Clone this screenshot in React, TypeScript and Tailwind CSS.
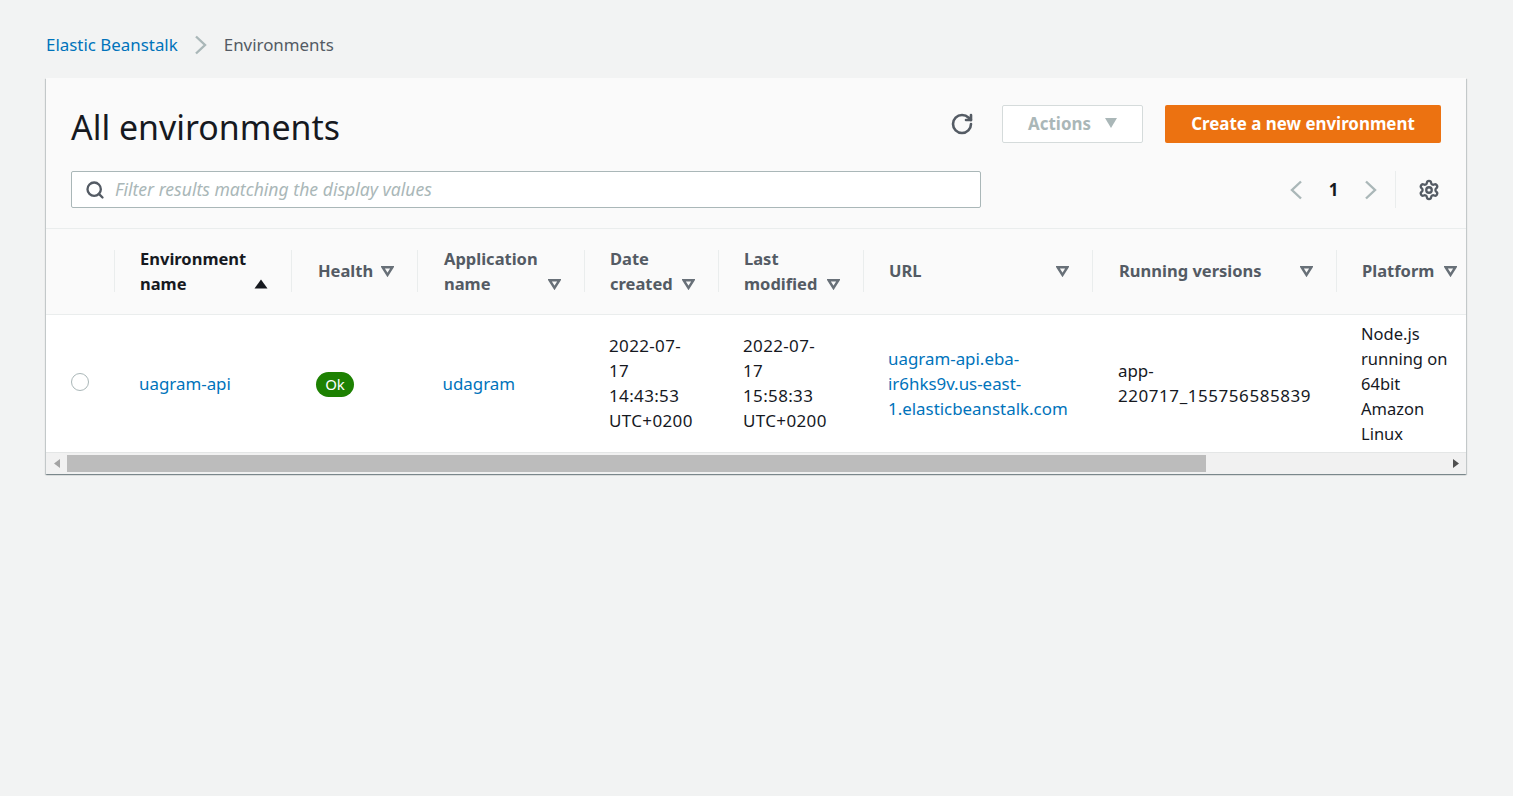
import { RotateCw, Search, Settings } from "lucide-react";

const columns = [
  { width: "w-[177px]", label: ["Environment", "name"], active: true, pad: "pl-[26px]" },
  { width: "w-[126px]", label: ["Health"], pad: "pl-[27px]" },
  { width: "w-[167px]", label: ["Application", "name"], pad: "pl-[27px]" },
  { width: "w-[134px]", label: ["Date", "created"], pad: "pl-[26px]" },
  { width: "w-[145px]", label: ["Last", "modified"], pad: "pl-[26px]" },
  { width: "w-[229px]", label: ["URL"], pad: "pl-[26px]" },
  { width: "w-[244px]", label: ["Running versions"], pad: "pl-[27px]" },
  { width: "w-[129px]", label: ["Platform"], last: true, pad: "pl-[26px]" },
];

function SortCaret({ active }: { active?: boolean }) {
  if (active) {
    return (
      <svg width="14" height="10" viewBox="0 0 14 10" className="shrink-0 mb-[7px]">
        <path d="M7 0.5 L13.5 9.5 H0.5 Z" fill="#16191f" />
      </svg>
    );
  }
  return (
    <svg width="13" height="11" viewBox="0 0 13 11" className="shrink-0 mb-[6px]">
      <path d="M1.6 1.2 H11.4 L6.5 9 Z" fill="none" stroke="#687078" strokeWidth="2.4" strokeLinejoin="miter" />
    </svg>
  );
}

function Chevron({ dir }: { dir: "left" | "right" }) {
  return (
    <svg width="14" height="20" viewBox="0 0 14 20" className="shrink-0">
      <path
        d={dir === "left" ? "M12 1.5 L3 10 L12 18.5" : "M2 1.5 L11 10 L2 18.5"}
        fill="none"
        stroke="#aab7b8"
        strokeWidth="2.4"
      />
    </svg>
  );
}

function Lines({ lines }: { lines: string[] }) {
  return (
    <>
      {lines.map((l) => (
        <div key={l}>{l}</div>
      ))}
    </>
  );
}

export default function App() {
  return (
    <div className="min-h-screen bg-[#f2f3f3] px-[46px] pt-[32px] font-['Noto_Sans',sans-serif] text-[16.9px] leading-[25px] text-[#16191f]">
      {/* Breadcrumb */}
      <div className="flex items-center h-[25px]">
        <a className="text-[#0073bb]">Elastic Beanstalk</a>
        <span className="ml-[16px] mr-[16px]">
          <Chevron dir="right" />
        </span>
        <span className="text-[#545b64]">Environments</span>
      </div>

      {/* Card */}
      <div className="mt-[21px] w-[1420px] bg-[#fafafa] shadow-[0_1px_1px_0_rgba(0,28,36,0.3),1px_1px_1px_0_rgba(0,28,36,0.15),-1px_1px_1px_0_rgba(0,28,36,0.15)]">
        <div className="px-[25px] pt-[27px] pb-[20px] border-b border-[#eaeded]">
          <div className="flex items-center h-[38px]">
            <h1 className="text-[33.9px] leading-[44px] font-normal mt-[5px]">All environments</h1>
            <RotateCw className="ml-auto mr-[28px] text-[#545b64]" size={24} strokeWidth={2.6} />
            <button className="flex items-center justify-center gap-[14px] w-[141px] h-[38px] pb-[2px] bg-white border border-[#d5dbdb] rounded-[2px] font-bold text-[#aab7b8]">
              Actions
              <svg width="12" height="10" viewBox="0 0 12 10">
                <path d="M0 0 H12 L6 10 Z" fill="#aab7b8" />
              </svg>
            </button>
            <button className="ml-[22px] w-[276px] h-[38px] pb-[2px] bg-[#ec7211] rounded-[2px] font-bold text-white">
              Create a new environment
            </button>
          </div>
          <div className="flex items-center mt-[28px] h-[37px]">
            <div className="flex items-center w-[910px] h-[37px] bg-white border border-[#aab7b8] rounded-[2px] pl-[13px]">
              <Search size={20} strokeWidth={2.8} className="text-[#545b64] shrink-0" />
              <span className="ml-[10px] italic text-[17.6px] text-[#aab7b8]">Filter results matching the display values</span>
            </div>
            <div className="ml-auto flex items-center mr-[1px]">
              <Chevron dir="left" />
              <span className="w-[61px] text-center font-bold">1</span>
              <Chevron dir="right" />
              <div className="ml-[17px] h-[37px] border-l border-[#eaeded]" />
              <Settings size={22} strokeWidth={2.5} className="ml-[22px] text-[#545b64]" />
            </div>
          </div>
        </div>

        {/* Table header */}
        <div className="flex items-center h-[86px] pb-[2px] border-b border-[#eaeded] text-[16.5px]">
          <div className="w-[68px] shrink-0" />
          {columns.map((c) => (
            <div
              key={c.label[0]}
              className={`${c.width} ${c.pad} relative shrink-0 flex items-end justify-between font-bold before:absolute before:left-0 before:top-1/2 before:-translate-y-1/2 before:h-[42px] before:border-l before:border-[#eaeded] ${
                c.last ? "pr-[8px]" : "pr-[23px]"
              } ${c.active ? "text-[#16191f]" : "text-[#545b64]"}`}
            >
              <div className="whitespace-nowrap">
                <Lines lines={c.label} />
              </div>
              <SortCaret active={c.active} />
            </div>
          ))}
        </div>

        {/* Table row */}
        <div className="flex items-center h-[137px] bg-white">
          <div className="w-[68px] shrink-0 pl-[25px]">
            <div className="w-[18px] h-[18px] rounded-full border border-[#aab7b8] bg-white mb-[3px]" />
          </div>
          <div className="w-[177px] shrink-0 pl-[25px] text-[#0073bb]">uagram-api</div>
          <div className="w-[126px] shrink-0 pl-[25px]">
            <span className="inline-flex items-center justify-center w-[38px] h-[25px] rounded-full bg-[#1d8102] text-white text-[15px] leading-[25px]">
              Ok
            </span>
          </div>
          <div className="w-[167px] shrink-0 pl-[25.5px] text-[#0073bb]">udagram</div>
          <div className="w-[134px] shrink-0 pl-[25px] mb-[2px] text-[17px] tracking-[0.35px]">
            <Lines lines={["2022-07-", "17", "14:43:53", "UTC+0200"]} />
          </div>
          <div className="w-[145px] shrink-0 pl-[25px] mb-[2px] text-[17px] tracking-[0.35px]">
            <Lines lines={["2022-07-", "17", "15:58:33", "UTC+0200"]} />
          </div>
          <div className="w-[229px] shrink-0 pl-[25px] text-[#0073bb]">
            <Lines lines={["uagram-api.eba-", "ir6hks9v.us-east-", "1.elasticbeanstalk.com"]} />
          </div>
          <div className="w-[244px] shrink-0 pl-[26px] mb-[2px] whitespace-nowrap">
            <div>app-</div>
            <div className="text-[17px] tracking-[0.55px]">220717_155756585839</div>
          </div>
          <div className="w-[129px] shrink-0 pl-[25px] text-[16.5px]">
            <Lines lines={["Node.js", "running on", "64bit", "Amazon", "Linux"]} />
          </div>
        </div>

        {/* Scrollbar */}
        <div className="flex items-center h-[22px] bg-[#f1f1f1] border-t border-[#e4e6e6]">
          <div className="w-[21px] flex justify-center shrink-0">
            <svg width="6" height="9" viewBox="0 0 6 9">
              <path d="M6 0 V9 L0 4.5 Z" fill="#a3a3a3" />
            </svg>
          </div>
          <div className="w-[1139px] h-[17px] bg-[#bcbcbc]" />
          <div className="ml-auto w-[21px] flex justify-center shrink-0">
            <svg width="6" height="9" viewBox="0 0 6 9">
              <path d="M0 0 V9 L6 4.5 Z" fill="#505050" />
            </svg>
          </div>
        </div>
      </div>
    </div>
  );
}
